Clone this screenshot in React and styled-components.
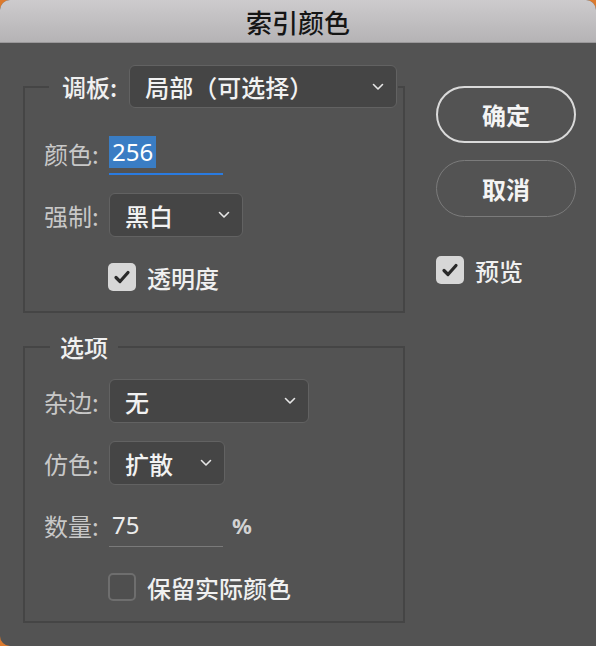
import styled, { createGlobalStyle } from 'styled-components';

const GlobalStyle = createGlobalStyle`
  html, body {
    margin: 0;
    padding: 0;
    background: #dc7a2d;
  }
  body {
    font-family: "Noto Sans CJK SC", "Noto Sans", sans-serif;
  }
`;

const Window = styled.div`
  width: 596px;
  height: 646px;
  background: #535353;
  border-radius: 10px 10px 0 10px;
  overflow: hidden;
  display: flex;
  flex-direction: column;
`;

const TitleBar = styled.div`
  flex: none;
  height: 43px;
  box-sizing: border-box;
  display: flex;
  align-items: center;
  justify-content: center;
  background: linear-gradient(#cdcbcd, #b5b3b5);
  border-bottom: 1px solid #9a989a;
  color: #151515;
  font-size: 26px;
  font-weight: 500;
`;

const Body = styled.div`
  display: flex;
  align-items: flex-start;
  gap: 31px;
  padding: 22px 20px 0 23px;
`;

const LeftColumn = styled.div`
  width: 382px;
  display: flex;
  flex-direction: column;
`;

const RightColumn = styled.div`
  width: 140px;
  padding-top: 21px;
  display: flex;
  flex-direction: column;
`;

const Group = styled.fieldset`
  margin: ${(p) => p.$top || 0}px 0 0;
  padding: 0 0 12px 19px;
  border: 2px solid #454545;
  min-width: 0;
`;

const Legend = styled.legend`
  margin-left: ${(p) => p.$offset}px;
  padding: 0 ${(p) => p.$padRight}px 0 ${(p) => p.$padLeft}px;
  line-height: 30px;
  font-size: 24px;
  font-weight: 500;
  color: #f0f0f0;
`;

const LegendRow = styled.div`
  display: flex;
  align-items: center;
  gap: 12px;
`;

const Rows = styled.div`
  display: flex;
  flex-direction: column;
  gap: 18px;
  padding-top: ${(p) => p.$top}px;
`;

const Row = styled.div`
  height: 44px;
  display: flex;
  align-items: center;
`;

const Label = styled.span`
  width: 65px;
  flex: none;
  font-size: 24px;
  color: #c8c8c8;
`;

const SelectBox = styled.div`
  width: ${(p) => p.$width}px;
  height: ${(p) => p.$height || 44}px;
  box-sizing: border-box;
  display: flex;
  align-items: center;
  justify-content: space-between;
  padding: 0 12px 0 15px;
  border: 1.5px solid #626262;
  border-radius: 6px;
  background: #454545;
  color: #f2f2f2;
  font-size: 24px;
  font-weight: 500;
`;

const Field = styled.div`
  width: 114px;
  height: 44px;
  box-sizing: border-box;
  display: flex;
  align-items: center;
  padding-left: 3px;
  border-bottom: ${(p) => (p.$active ? '2px solid #2a7be0' : '1px solid #7a7a7a')};
  color: #ececec;
  font-family: "Noto Sans", "Liberation Sans", sans-serif;
  font-size: 24px;
`;

const Selected = styled.span`
  display: inline-block;
  height: 32px;
  line-height: 32px;
  padding: 0 3px;
  margin-left: -3px;
  background: #3a7dc4;
  color: #ffffff;
`;

const Unit = styled.span`
  margin-left: 9px;
  color: #d2d2d2;
  font-family: "Noto Sans", "Liberation Sans", sans-serif;
  font-size: 22px;
  font-weight: 700;
`;

const CheckRow = styled.div`
  display: flex;
  align-items: center;
  gap: 11px;
  height: ${(p) => p.$height || 44}px;
  padding-left: ${(p) => p.$indent || 0}px;
  margin-top: ${(p) => p.$top || 0}px;
  color: #f0f0f0;
  font-size: 24px;
  font-weight: 500;
`;

const Box = styled.span`
  width: 28px;
  height: 28px;
  flex: none;
  box-sizing: border-box;
  border-radius: 5px;
  display: flex;
  align-items: center;
  justify-content: center;
  background: ${(p) => (p.$checked ? '#d7d7d7' : '#4f4f4f')};
  border: ${(p) => (p.$checked ? 'none' : '2px solid #6e6e6e')};
`;

const PillButton = styled.button`
  width: 140px;
  height: 57px;
  margin-bottom: 17px;
  box-sizing: border-box;
  border-radius: 29px;
  background: transparent;
  border: ${(p) => (p.$primary ? '2px solid #dadada' : '1.5px solid #7b7b7b')};
  color: #f4f4f4;
  font-family: inherit;
  font-size: 24px;
  font-weight: 700;
  padding: 0;
`;

const Chevron = () => (
  <svg width="12" height="8" viewBox="0 0 12 8" fill="none">
    <path d="M1.5 1.5 L6 6 L10.5 1.5" stroke="#e6e6e6" strokeWidth="1.6" strokeLinecap="round" strokeLinejoin="round" />
  </svg>
);

const Select = ({ width, height, value }) => (
  <SelectBox $width={width} $height={height}>
    <span>{value}</span>
    <Chevron />
  </SelectBox>
);

const Checkbox = ({ checked }) => (
  <Box $checked={checked}>
    {checked && (
      <svg width="18" height="16" viewBox="0 0 18 16" fill="none">
        <path d="M3 8.5 L7 12.5 L15 3.5" stroke="#2a2a2a" strokeWidth="3.2" strokeLinecap="round" strokeLinejoin="round" />
      </svg>
    )}
  </Box>
);

export default function App() {
  return (
    <>
      <GlobalStyle />
      <Window>
        <TitleBar>索引颜色</TitleBar>
        <Body>
          <LeftColumn>
            <Group>
              <Legend $offset={5} $padLeft={13} $padRight={1}>
                <LegendRow>
                  <span>调板:</span>
                  <Select width={268} height={43} value="局部（可选择）" />
                </LegendRow>
              </Legend>
              <Rows $top={23}>
                <Row>
                  <Label>颜色:</Label>
                  <Field $active>
                    <Selected>256</Selected>
                  </Field>
                </Row>
                <Row>
                  <Label>强制:</Label>
                  <Select width={134} value="黑白" />
                </Row>
                <CheckRow $indent={64}>
                  <Checkbox checked />
                  <span>透明度</span>
                </CheckRow>
              </Rows>
            </Group>
            <Group $top={19}>
              <Legend $offset={6} $padLeft={10} $padRight={10}>
                选项
              </Legend>
              <Rows $top={17}>
                <Row>
                  <Label>杂边:</Label>
                  <Select width={200} value="无" />
                </Row>
                <Row>
                  <Label>仿色:</Label>
                  <Select width={116} value="扩散" />
                </Row>
                <Row>
                  <Label>数量:</Label>
                  <Field>75</Field>
                  <Unit>%</Unit>
                </Row>
                <CheckRow $indent={64}>
                  <Checkbox />
                  <span>保留实际颜色</span>
                </CheckRow>
              </Rows>
            </Group>
          </LeftColumn>
          <RightColumn>
            <PillButton $primary>确定</PillButton>
            <PillButton>取消</PillButton>
            <CheckRow $height={28} $top={22}>
              <Checkbox checked />
              <span>预览</span>
            </CheckRow>
          </RightColumn>
        </Body>
      </Window>
    </>
  );
}
